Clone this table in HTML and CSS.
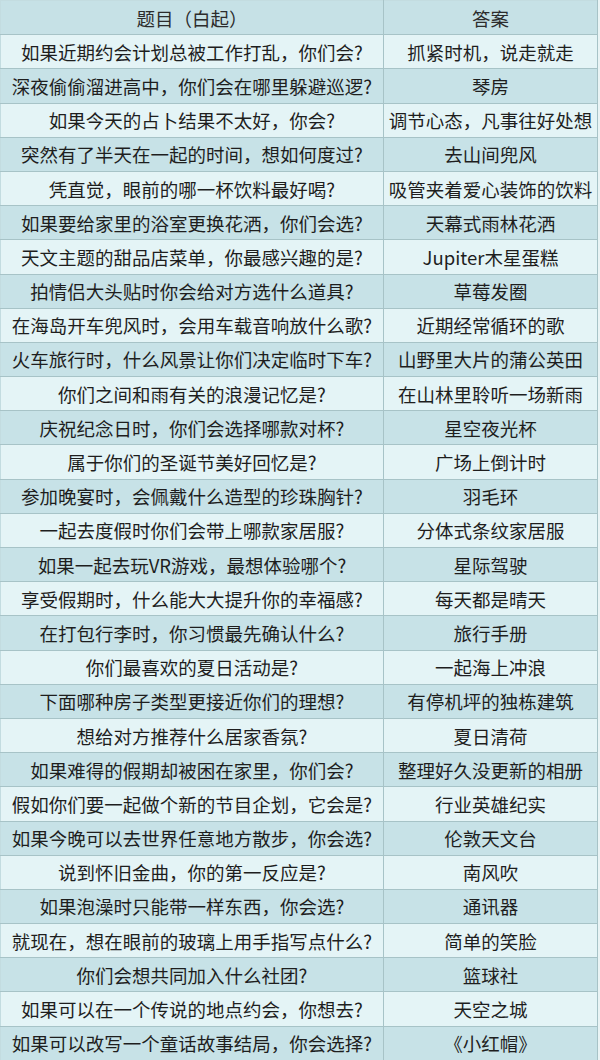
FILE: index.html
```html
<!DOCTYPE html>
<html lang="zh-CN">
<head>
<meta charset="utf-8">
<title>白起 题目答案</title>
<link rel="stylesheet" href="styles.css">
</head>
<body>
<table class="qa">
  <colgroup><col class="c-q"><col class="c-a"></colgroup>
  <thead>
    <tr><th>题目（白起）</th><th>答案</th></tr>
  </thead>
  <tbody>
    <tr><td>如果近期约会计划总被工作打乱，你们会?</td><td>抓紧时机，说走就走</td></tr>
    <tr><td>深夜偷偷溜进高中，你们会在哪里躲避巡逻?</td><td>琴房</td></tr>
    <tr><td>如果今天的占卜结果不太好，你会?</td><td>调节心态，凡事往好处想</td></tr>
    <tr><td>突然有了半天在一起的时间，想如何度过?</td><td>去山间兜风</td></tr>
    <tr><td>凭直觉，眼前的哪一杯饮料最好喝?</td><td>吸管夹着爱心装饰的饮料</td></tr>
    <tr><td>如果要给家里的浴室更换花洒，你们会选?</td><td>天幕式雨林花洒</td></tr>
    <tr><td>天文主题的甜品店菜单，你最感兴趣的是?</td><td>Jupiter木星蛋糕</td></tr>
    <tr><td>拍情侣大头贴时你会给对方选什么道具?</td><td>草莓发圈</td></tr>
    <tr><td>在海岛开车兜风时，会用车载音响放什么歌?</td><td>近期经常循环的歌</td></tr>
    <tr><td>火车旅行时，什么风景让你们决定临时下车?</td><td>山野里大片的蒲公英田</td></tr>
    <tr><td>你们之间和雨有关的浪漫记忆是?</td><td>在山林里聆听一场新雨</td></tr>
    <tr><td>庆祝纪念日时，你们会选择哪款对杯?</td><td>星空夜光杯</td></tr>
    <tr><td>属于你们的圣诞节美好回忆是?</td><td>广场上倒计时</td></tr>
    <tr><td>参加晚宴时，会佩戴什么造型的珍珠胸针?</td><td>羽毛环</td></tr>
    <tr><td>一起去度假时你们会带上哪款家居服?</td><td>分体式条纹家居服</td></tr>
    <tr><td>如果一起去玩VR游戏，最想体验哪个?</td><td>星际驾驶</td></tr>
    <tr><td>享受假期时，什么能大大提升你的幸福感?</td><td>每天都是晴天</td></tr>
    <tr><td>在打包行李时，你习惯最先确认什么?</td><td>旅行手册</td></tr>
    <tr><td>你们最喜欢的夏日活动是?</td><td>一起海上冲浪</td></tr>
    <tr><td>下面哪种房子类型更接近你们的理想?</td><td>有停机坪的独栋建筑</td></tr>
    <tr><td>想给对方推荐什么居家香氛?</td><td>夏日清荷</td></tr>
    <tr><td>如果难得的假期却被困在家里，你们会?</td><td>整理好久没更新的相册</td></tr>
    <tr><td>假如你们要一起做个新的节目企划，它会是?</td><td>行业英雄纪实</td></tr>
    <tr><td>如果今晚可以去世界任意地方散步，你会选?</td><td>伦敦天文台</td></tr>
    <tr><td>说到怀旧金曲，你的第一反应是?</td><td>南风吹</td></tr>
    <tr><td>如果泡澡时只能带一样东西，你会选?</td><td>通讯器</td></tr>
    <tr><td>就现在，想在眼前的玻璃上用手指写点什么?</td><td>简单的笑脸</td></tr>
    <tr><td>你们会想共同加入什么社团?</td><td>篮球社</td></tr>
    <tr><td>如果可以在一个传说的地点约会，你想去?</td><td>天空之城</td></tr>
    <tr><td>如果可以改写一个童话故事结局，你会选择?</td><td>《小红帽》</td></tr>
  </tbody>
</table>
</body>
</html>
```

FILE: styles.css
```css
html, body {
  margin: 0;
  padding: 0;
  background: #e9f4f5;
}

.qa {
  border-collapse: collapse;
  width: 597px;
  table-layout: fixed;
  font-family: "Noto Sans CJK SC", "Noto Sans", sans-serif;
  font-size: 18.5px;
  color: #1e1e1e;
}

.c-q { width: 383px; }
.c-a { width: 214px; }

.qa tr {
  height: 34.2px;
}

.qa th,
.qa td {
  border: 1px solid #a7c3c7;
  padding: 0;
  text-align: center;
  vertical-align: middle;
  white-space: nowrap;
  overflow: hidden;
  line-height: 1.3;
}

.qa th {
  font-weight: normal;
  color: #2c2c2c;
  background: #c6e1e6;
}

.qa tbody tr:nth-child(odd) td {
  background: #e4f4f6;
}

.qa tbody tr:nth-child(even) td {
  background: #c7e2e7;
}

.qa tr > :first-child {
  border-left-color: #c3dce0;
}

.qa thead th {
  border-top-color: #c3dce0;
}
```
